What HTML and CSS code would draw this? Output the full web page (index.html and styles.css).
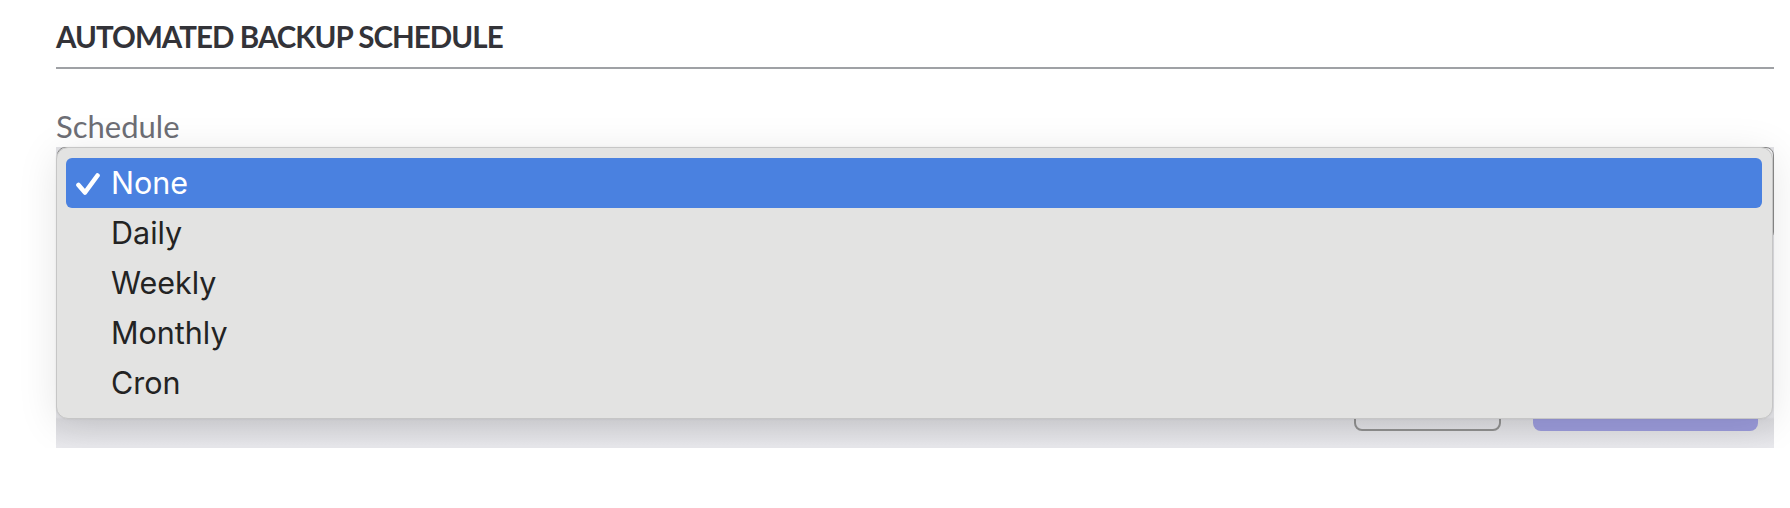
FILE: index.html
```html
<!DOCTYPE html>
<html lang="en">
<head>
<meta charset="utf-8">
<title>Automated Backup Schedule</title>
<link rel="stylesheet" href="styles.css">
</head>
<body>
<div class="page">
  <h2 class="section-title">AUTOMATED BACKUP SCHEDULE</h2>
  <div class="label">Schedule</div>
  <div class="field">
    <div class="select-under"></div>
    <div class="actions">
      <div class="btn btn-outline"></div>
      <div class="btn btn-primary"></div>
    </div>
    <div class="menu">
      <div class="item selected">
        <svg class="check" viewBox="0 0 24 22" width="24" height="22" aria-hidden="true"><path d="M2.5 12 L9 19.5 L21.5 2.5" fill="none" stroke="#fff" stroke-width="4.6" stroke-linecap="round" stroke-linejoin="round"/></svg>
        <span>None</span>
      </div>
      <div class="item"><span>Daily</span></div>
      <div class="item"><span>Weekly</span></div>
      <div class="item"><span>Monthly</span></div>
      <div class="item"><span>Cron</span></div>
    </div>
  </div>
</div>
</body>
</html>
```

FILE: styles.css
```css
html, body {
  margin: 0;
  padding: 0;
  background: #ffffff;
}

.page {
  padding: 0 16px 0 56px;
  font-family: "Lato", "Liberation Sans", sans-serif;
}

.section-title {
  margin: 0;
  padding-top: 19px;
  padding-bottom: 12px;
  font-size: 29.5px;
  line-height: 36px;
  font-weight: 700;
  letter-spacing: -0.95px;
  color: #333338;
  border-bottom: 2px solid #9fa1a5;
}

.label {
  margin-top: 39px;
  font-size: 31px;
  line-height: 36px;
  color: #6d6e75;
  height: 39px;
}

.field {
  position: relative;
  display: flex;
  flex-direction: column;
  padding-left: 1px;
  padding-bottom: 17px;
  background: linear-gradient(to bottom, #e2e2e6 0, #e2e2e6 270px, #d8d8dc 272px, #e8e8ec 299px);
}

.select-under {
  height: 91px;
  border: 1px solid #8c8c8c;
  border-radius: 8px;
  background: #f4f4f6;
}

.actions {
  display: flex;
  justify-content: flex-end;
  gap: 32px;
  margin-top: 101px;
  padding-right: 16px;
}

.btn {
  height: 90px;
  border-radius: 8px;
  box-sizing: border-box;
}

.btn-outline {
  width: 147px;
  border: 2px solid #8e8e8e;
}

.btn-primary {
  width: 225px;
  background: #9999d8;
}

.menu {
  position: absolute;
  top: 0;
  left: 0;
  right: 1px;
  box-sizing: border-box;
  padding: 9.5px 10px 10px 9px;
  background: #e3e3e2;
  border: 1px solid #c6c6c6;
  border-radius: 12px;
  box-shadow: 0 6px 40px rgba(0, 0, 0, 0.10), 0 0 2px rgba(0, 0, 0, 0.08);
  font-family: "Inter", "Liberation Sans", sans-serif;
  font-size: 30.5px;
  color: #232323;
}

.item {
  position: relative;
  display: flex;
  align-items: center;
  height: 50px;
  padding-left: 45px;
  border-radius: 6px;
}

.item.selected {
  background: #4a81e0;
  color: #ffffff;
}

.check {
  position: absolute;
  left: 10px;
  top: 15px;
}
```
